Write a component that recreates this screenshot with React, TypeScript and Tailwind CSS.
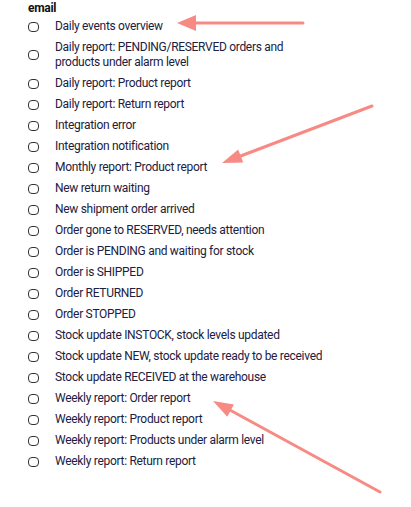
import React from 'react';

const events = [
  "Daily events overview",
  "Daily report: PENDING/RESERVED orders and\nproducts under alarm level",
  "Daily report: Product report",
  "Daily report: Return report",
  "Integration error",
  "Integration notification",
  "Monthly report: Product report",
  "New return waiting",
  "New shipment order arrived",
  "Order gone to RESERVED, needs attention",
  "Order is PENDING and waiting for stock",
  "Order is SHIPPED",
  "Order RETURNED",
  "Order STOPPED",
  "Stock update INSTOCK, stock levels updated",
  "Stock update NEW, stock update ready to be received",
  "Stock update RECEIVED at the warehouse",
  "Weekly report: Order report",
  "Weekly report: Product report",
  "Weekly report: Products under alarm level",
  "Weekly report: Return report",
];

const Arrows = () => (
  <svg className="absolute left-0 top-0 pointer-events-none" width="411" height="507" viewBox="0 0 411 507">
    <g stroke="#f88a84" strokeWidth="3" strokeLinecap="round" fill="#f88a84">
      <line x1="303" y1="23" x2="192" y2="23" />
      <polygon points="177,23 196,15 196,31" stroke="none" />
      <line x1="372" y1="106" x2="238" y2="157" />
      <polygon points="222,163 243.2,162.4 238.2,149.4" stroke="none" />
      <line x1="380" y1="492" x2="228" y2="409" />
      <polygon points="213,401 233.9,404.5 227.3,416.7" stroke="none" />
    </g>
  </svg>
);

const App = () => {
  return (
    <div className="relative w-[411px] h-[507px] bg-white font-['Roboto',sans-serif] text-[#1c2041]">
      <div className="pl-[28px] pt-[1px]">
        <div className="text-[12px] font-bold leading-[15px] tracking-[-0.3px] text-[#111]">email</div>
        <ul>
          {events.map((ev, i) => (
            <li key={i} className="flex items-center py-[3px]">
              <span className="w-[11px] h-[10px] shrink-0 rounded-[4px] border-[1.5px] border-[#333]"></span>
              <span className="ml-[16px] whitespace-pre-line text-[12px] leading-[15px] tracking-[-0.3px]">{ev}</span>
            </li>
          ))}
        </ul>
      </div>
      <Arrows />
    </div>
  );
};

export default App;
